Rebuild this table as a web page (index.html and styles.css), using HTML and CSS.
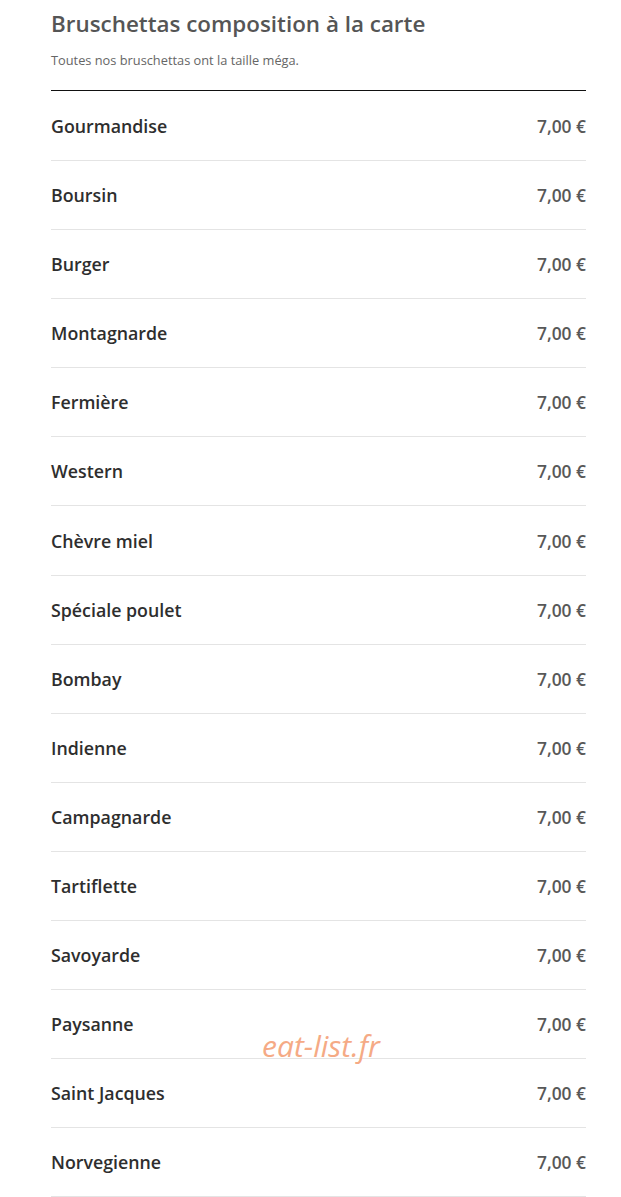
FILE: index.html
```html
<!DOCTYPE html>
<html lang="fr">
<head>
  <meta charset="UTF-8" />
  <meta name="viewport" content="width=device-width, initial-scale=1.0"/>
  <title>Bruschettas</title>
  <link rel="stylesheet" href="styles.css">
</head>
<body>
  <div class="menu">
    <div class="menu-head">
      <h2>Bruschettas composition à la carte</h2>
      <p>Toutes nos bruschettas ont la taille méga.</p>
    </div>
    <ul class="items">
      <li><span class="name">Gourmandise</span><span class="price">7,00 €</span></li>
      <li><span class="name">Boursin</span><span class="price">7,00 €</span></li>
      <li><span class="name">Burger</span><span class="price">7,00 €</span></li>
      <li><span class="name">Montagnarde</span><span class="price">7,00 €</span></li>
      <li><span class="name">Fermière</span><span class="price">7,00 €</span></li>
      <li><span class="name">Western</span><span class="price">7,00 €</span></li>
      <li><span class="name">Chèvre miel</span><span class="price">7,00 €</span></li>
      <li><span class="name">Spéciale poulet</span><span class="price">7,00 €</span></li>
      <li><span class="name">Bombay</span><span class="price">7,00 €</span></li>
      <li><span class="name">Indienne</span><span class="price">7,00 €</span></li>
      <li><span class="name">Campagnarde</span><span class="price">7,00 €</span></li>
      <li><span class="name">Tartiflette</span><span class="price">7,00 €</span></li>
      <li><span class="name">Savoyarde</span><span class="price">7,00 €</span></li>
      <li><span class="name">Paysanne</span><span class="price">7,00 €</span></li>
      <li><span class="name">Saint Jacques</span><span class="price">7,00 €</span></li>
      <li><span class="name">Norvegienne</span><span class="price">7,00 €</span></li>
    </ul>
  </div>
  <div class="watermark">eat-list.fr</div>
</body>
</html>
```

FILE: styles.css
```css
* {
  margin: 0;
  padding: 0;
  box-sizing: border-box;
  font-family: "Open Sans", Arial, sans-serif;
}

body {
  background: #fff;
  position: relative;
}

.menu {
  width: 535px;
  margin-left: 51px;
}

.menu-head {
  padding-top: 9px;
  padding-bottom: 22px;
  border-bottom: 1px solid #111;
}

.menu-head h2 {
  font-size: 22.4px;
  font-weight: 600;
  line-height: 30px;
  color: #555;
}

.menu-head p {
  margin-top: 13px;
  font-size: 12.8px;
  line-height: 16px;
  color: #666;
}

.items {
  list-style: none;
}

.items li {
  display: flex;
  justify-content: space-between;
  align-items: center;
  height: 69.1px;
  border-bottom: 1px solid #e4e4e4;
}

.items li:first-child {
  height: 70px;
}

.name {
  font-size: 17.8px;
  font-weight: 600;
  color: #2e2e2e;
}

.price {
  font-size: 17.4px;
  font-weight: 600;
  color: #585858;
}

.watermark {
  position: absolute;
  left: 262px;
  top: 1025px;
  font-size: 30px;
  font-style: italic;
  color: #f5aa85;
}
```
